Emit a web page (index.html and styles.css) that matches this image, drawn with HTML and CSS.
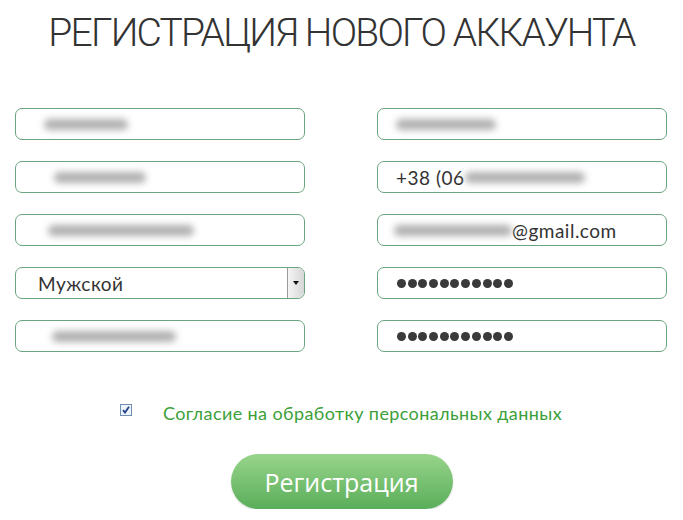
FILE: index.html
```html
<!DOCTYPE html>
<html lang="ru">
  <head>
    <meta charset="UTF-8" />
    <meta name="viewport" content="width=device-width, initial-scale=1.0" />
    <title>Регистрация нового аккаунта</title>
    <link rel="stylesheet" href="styles.css">
  </head>
  <body>
    <div class="main">
      <h1 class="title">РЕГИСТРАЦИЯ НОВОГО АККАУНТА</h1>

      <div class="form">
        <div class="field">
          <span class="smear" style="width: 84px; margin-left: 10px"></span>
        </div>
        <div class="field">
          <span class="smear" style="width: 100px; margin-left: 0"></span>
        </div>

        <div class="field">
          <span class="smear" style="width: 92px; margin-left: 20px"></span>
        </div>
        <div class="field">
          <span class="text">+38 (06</span>
          <span class="smear" style="width: 120px; margin-left: 0"></span>
        </div>

        <div class="field">
          <span class="smear" style="width: 146px; margin-left: 14px"></span>
        </div>
        <div class="field">
          <span class="smear" style="width: 118px; margin-left: -2px"></span>
          <span class="text">@gmail.com</span>
        </div>

        <div class="field select">
          <span class="text">Мужской</span>
          <span class="arrow"></span>
        </div>
        <div class="field">
          <div class="dots">
            <i></i><i></i><i></i><i></i><i></i><i></i><i></i><i></i><i></i><i></i><i></i>
          </div>
        </div>

        <div class="field">
          <span class="smear" style="width: 124px; margin-left: 18px"></span>
        </div>
        <div class="field">
          <div class="dots">
            <i></i><i></i><i></i><i></i><i></i><i></i><i></i><i></i><i></i><i></i><i></i>
          </div>
        </div>
      </div>

      <div class="agree">
        <span class="check">
          <svg width="12" height="12" viewBox="0 0 12 12">
            <rect x="0.5" y="0.5" width="11" height="11" fill="#eef3f9" stroke="#6f8fb4" />
            <path d="M3 6.2 L5 8.6 L9 2.8" fill="none" stroke="#1f3f8a" stroke-width="1.8" />
          </svg>
        </span>
        <span class="agree-text">Согласие на обработку персональных данных</span>
      </div>

      <div class="actions">
        <button class="btn">Регистрация</button>
      </div>
    </div>
  </body>
</html>
```

FILE: styles.css
```css
* {
  margin: 0;
  padding: 0;
  box-sizing: border-box;
}
body {
  background: #fff;
  font-family: Lato, "Open Sans", sans-serif;
  color: #333;
}
.title {
  text-align: center;
  white-space: nowrap;
  font-family: Roboto, sans-serif;
  font-weight: 300;
  font-size: 39px;
  line-height: 48px;
  padding-top: 9px;
  color: #333;
  letter-spacing: -1.8px;
}
.form {
  display: grid;
  grid-template-columns: 290px 290px;
  column-gap: 72px;
  row-gap: 21px;
  padding-left: 15px;
  margin-top: 51px;
}
.field {
  height: 32px;
  border: 1px solid #6aa580;
  border-radius: 7px;
  display: flex;
  align-items: center;
  padding-left: 18px;
  overflow: hidden;
}
.field .text {
  font-size: 19px;
  letter-spacing: 0.5px;
  color: #333;
}
.smear {
  display: inline-block;
  height: 11px;
  background: #b0b0b0;
  border-radius: 6px;
  filter: blur(3.5px);
}
.select {
  padding-left: 22px;
  padding-right: 0;
  justify-content: space-between;
}
.arrow {
  width: 17px;
  height: 30px;
  border-left: 1px solid #9a9a9a;
  background: linear-gradient(to right, #f4f4f4, #d6d6d6);
  display: flex;
  align-items: center;
  justify-content: center;
}
.arrow::after {
  content: "";
  border-left: 3px solid transparent;
  border-right: 3px solid transparent;
  border-top: 4px solid #111;
}
.dots {
  display: flex;
  gap: 1.7px;
  margin-left: 1px;
}
.dots i {
  width: 9px;
  height: 9px;
  border-radius: 50%;
  background: #3a3a3a;
}
.agree {
  display: flex;
  align-items: center;
  margin-top: 50px;
  padding-left: 120px;
}
.check {
  display: flex;
  margin-top: -6px;
}
.agree-text {
  margin-left: 31px;
  font-size: 18px;
  letter-spacing: 0.4px;
  color: #3c9f3a;
}
.actions {
  display: flex;
  justify-content: center;
  margin-top: 30px;
}
.btn {
  width: 222px;
  height: 55px;
  border: none;
  border-radius: 28px;
  background: linear-gradient(to bottom, #98d48b, #5aae5a);
  color: #fff;
  font-family: "Open Sans", sans-serif;
  font-size: 25px;
  box-shadow: 0 1px 2px rgba(0, 0, 0, 0.15);
}
```
